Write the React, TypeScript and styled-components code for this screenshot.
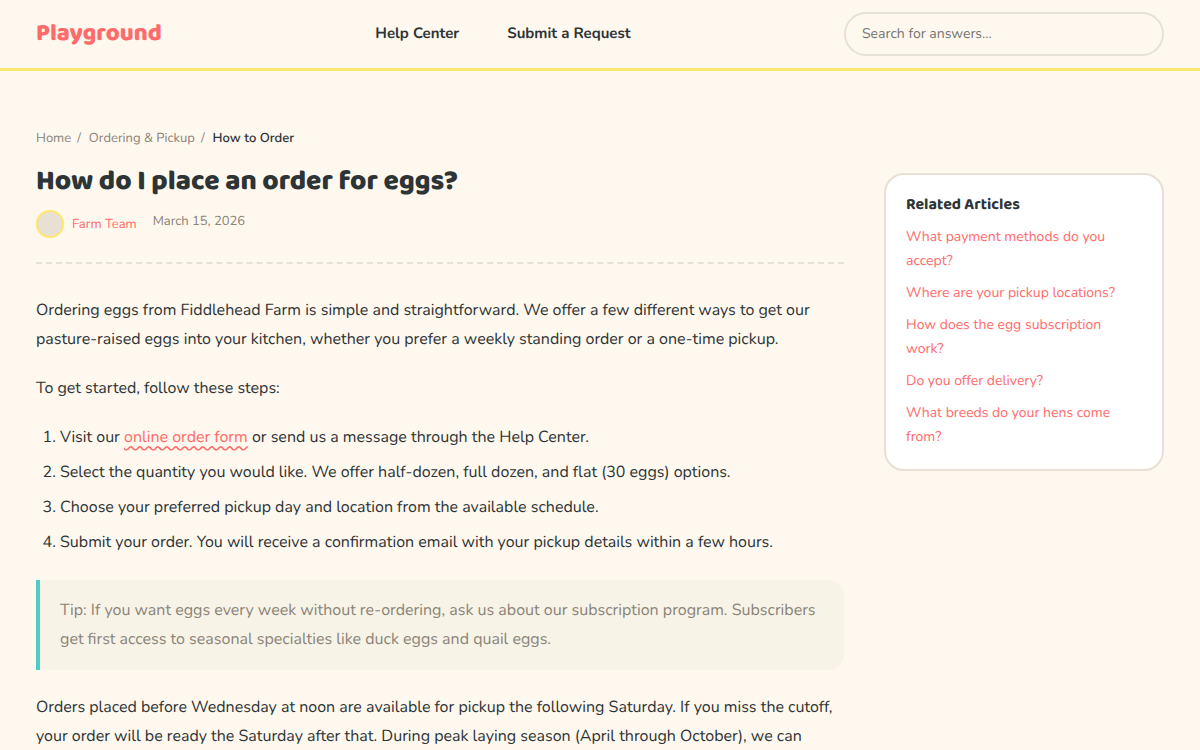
import React from "react";
import styled, { createGlobalStyle } from "styled-components";

const colors = {
  cream: "#fff8ee",
  coral: "#ff6b6b",
  yellow: "#ffe66d",
  teal: "#4ecdc4",
  ink: "#2d3436",
  muted: "#8b8378",
  line: "#e8e0d5",
  tip: "#f7f3e7",
};

const bodyFont = `"Nunito", "Lato", sans-serif`;
const displayFont = `"Baloo 2", "Lato", sans-serif`;

const GlobalStyle = createGlobalStyle`
  *, *::before, *::after { box-sizing: border-box; }
  body {
    margin: 0;
    background: ${colors.cream};
    color: ${colors.ink};
    font-family: ${bodyFont};
    font-size: 16px;
    line-height: 27px;
    text-rendering: geometricPrecision;
    -webkit-font-smoothing: antialiased;
  }
`;

const Header = styled.header`
  display: flex;
  align-items: center;
  justify-content: space-between;
  padding: 12px 36px;
  border-bottom: 3px solid ${colors.yellow};
`;

const Logo = styled.a`
  color: ${colors.coral};
  font-family: ${displayFont};
  font-size: 24px;
  font-weight: 800;
  line-height: 26px;
  text-decoration: none;
`;

const Nav = styled.nav`
  display: flex;
  gap: 48px;
`;

const NavLink = styled.a`
  color: ${colors.ink};
  font-size: 15px;
  font-weight: 700;
  text-decoration: none;
`;

const SearchInput = styled.input`
  width: 320px;
  height: 44px;
  padding: 0 16px 2px;
  border: 2px solid ${colors.line};
  border-radius: 22px;
  background: transparent;
  color: ${colors.ink};
  font-family: inherit;
  font-size: 14px;
  text-rendering: inherit;
  &::placeholder { color: #757575; }
`;

const Page = styled.div`
  display: grid;
  grid-template-columns: minmax(0, 1fr) 280px;
  align-items: start;
  gap: 40px;
  padding: 56px 36px 48px;
`;

const Breadcrumbs = styled.ol`
  display: flex;
  margin: 0 0 15px;
  padding: 0;
  gap: 8px;
  list-style: none;
  color: ${colors.muted};
  font-size: 13px;
  line-height: 22px;
`;

const Crumb = styled.li`
  &:not(:last-child)::after {
    content: "/";
    margin-left: 6px;
  }
  &[aria-current] {
    color: ${colors.ink};
    font-weight: 600;
  }
`;

const CrumbLink = styled.a`
  color: inherit;
  text-decoration: none;
`;

const Title = styled.h1`
  margin: 0 0 10px;
  font-family: ${displayFont};
  font-size: 28px;
  font-weight: 800;
  line-height: 36px;
`;

const Meta = styled.div`
  display: flex;
  align-items: flex-start;
  gap: 16px;
  padding-bottom: 24px;
  border-bottom: 2px dashed ${colors.line};
  color: ${colors.muted};
  font-size: 13px;
  line-height: 22px;
`;

const Author = styled.a`
  display: flex;
  align-items: center;
  gap: 8px;
  color: ${colors.coral};
  text-decoration: none;
`;

const Avatar = styled.span`
  width: 28px;
  height: 28px;
  border: 2px solid ${colors.yellow};
  border-radius: 50%;
  background: ${colors.line};
`;

const Content = styled.div`
  padding-top: 32px;
  line-height: 29px;
`;

const Paragraph = styled.p`
  margin: 0 0 20px;
`;

const Steps = styled.ol`
  display: grid;
  gap: 6px;
  margin: 0;
  padding-left: 24px;
`;

const InlineLink = styled.a`
  color: ${colors.coral};
  text-decoration: underline wavy;
  text-underline-offset: 3px;
`;

const Tip = styled.blockquote`
  margin: 23px 0;
  padding: 16px 20px;
  border-left: 4px solid ${colors.teal};
  border-radius: 0 16px 16px 0;
  background: ${colors.tip};
  color: ${colors.muted};
`;

const Related = styled.aside`
  margin-top: 46px;
  padding: 20px;
  border: 2px solid ${colors.line};
  border-radius: 20px;
  background: #fff;
`;

const RelatedTitle = styled.h2`
  margin: 0 0 8px;
  font-family: ${displayFont};
  font-size: 16px;
  font-weight: 700;
  line-height: 22px;
`;

const RelatedList = styled.ul`
  display: grid;
  gap: 8px;
  margin: 0;
  padding: 0;
  list-style: none;
  font-size: 14px;
  line-height: 24px;
`;

const RelatedLink = styled.a`
  color: ${colors.coral};
  text-decoration: none;
`;

const related = [
  "What payment methods do you accept?",
  "Where are your pickup locations?",
  "How does the egg subscription work?",
  "Do you offer delivery?",
  "What breeds do your hens come from?",
];

export default function App() {
  return (
    <>
      <GlobalStyle />
      <Header>
        <Logo href="#">Playground</Logo>
        <Nav aria-label="Main">
          <NavLink href="#help">Help Center</NavLink>
          <NavLink href="#request">Submit a Request</NavLink>
        </Nav>
        <SearchInput type="search" aria-label="Search" placeholder="Search for answers..." />
      </Header>
      <Page>
        <main>
          <nav aria-label="Breadcrumb">
            <Breadcrumbs>
              <Crumb><CrumbLink href="#home">Home</CrumbLink></Crumb>
              <Crumb><CrumbLink href="#ordering">Ordering &amp; Pickup</CrumbLink></Crumb>
              <Crumb aria-current="page">How to Order</Crumb>
            </Breadcrumbs>
          </nav>
          <Title>How do I place an order for eggs?</Title>
          <Meta>
            <Author href="#author"><Avatar />Farm Team</Author>
            <time dateTime="2026-03-15">March 15, 2026</time>
          </Meta>
          <Content>
            <Paragraph>
              Ordering eggs from Fiddlehead Farm is simple and straightforward. We offer a few different ways to get our
              pasture-raised eggs into your kitchen, whether you prefer a weekly standing order or a one-time pickup.
            </Paragraph>
            <Paragraph>To get started, follow these steps:</Paragraph>
            <Steps>
              <li>Visit our <InlineLink href="#form">online order form</InlineLink> or send us a message through the Help Center.</li>
              <li>Select the quantity you would like. We offer half-dozen, full dozen, and flat (30 eggs) options.</li>
              <li>Choose your preferred pickup day and location from the available schedule.</li>
              <li>Submit your order. You will receive a confirmation email with your pickup details within a few hours.</li>
            </Steps>
            <Tip>
              Tip: If you want eggs every week without re-ordering, ask us about our subscription program. Subscribers
              get first access to seasonal specialties like duck eggs and quail eggs.
            </Tip>
            <Paragraph>
              Orders placed before Wednesday at noon are available for pickup the following Saturday. If you miss the cutoff,
              your order will be ready the Saturday after that. During peak laying season (April through October), we can
            </Paragraph>
          </Content>
        </main>
        <Related>
          <RelatedTitle>Related Articles</RelatedTitle>
          <RelatedList>
            {related.map((text) => (
              <li key={text}><RelatedLink href="#related">{text}</RelatedLink></li>
            ))}
          </RelatedList>
        </Related>
      </Page>
    </>
  );
}
